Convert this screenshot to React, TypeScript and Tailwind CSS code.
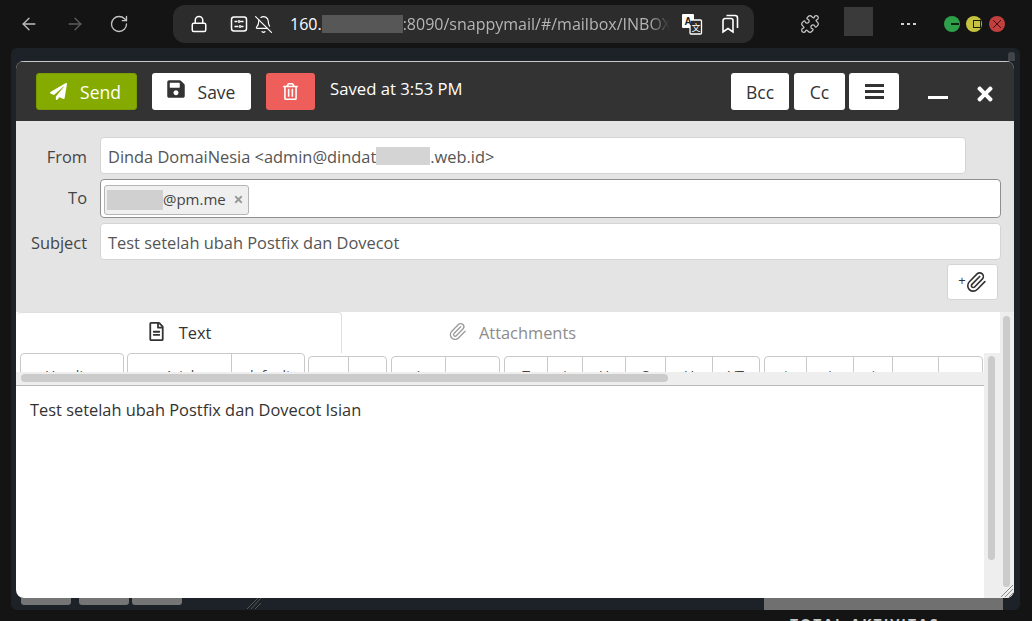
import React from "react";
import { ArrowLeft, ArrowRight, RotateCw, Lock, BellOff, Puzzle, Paperclip } from "lucide-react";
import { FaPaperPlane, FaSave, FaRegTrashAlt, FaRegFileAlt, FaTimes } from "react-icons/fa";

const groups: { mt: string; gap: string; cells: { w: string; t: string }[] }[] = [
  { mt: "mt-0", gap: "ml-[4px]", cells: [{ w: "w-[102px]", t: "Heading" }] },
  { mt: "mt-0", gap: "ml-[3px]", cells: [{ w: "w-[103px]", t: "Arial" }, { w: "w-[73px]", t: "default" }] },
  { mt: "mt-[3px]", gap: "ml-[3px]", cells: [{ w: "w-[39px]", t: "\u2013" }, { w: "w-[38px]", t: "\u2013" }] },
  { mt: "mt-[3px]", gap: "ml-[4px]", cells: [{ w: "w-[53px]", t: "i" }, { w: "w-[54px]", t: "o" }] },
  { mt: "mt-[3px]", gap: "ml-[4px]", cells: [{ w: "w-[42px]", t: "T" }, { w: "w-[35px]", t: "i" }, { w: "w-[43px]", t: "U" }, { w: "w-[40px]", t: "S" }, { w: "w-[47px]", t: "U" }, { w: "w-[47px]", t: "VT" }] },
  { mt: "mt-[3px]", gap: "ml-[4px]", cells: [{ w: "w-[41px]", t: "\u2018" }, { w: "w-[47px]", t: "i" }, { w: "w-[39px]", t: "\u2018" }, { w: "w-[46px]", t: "" }, { w: "w-[44px]", t: "" }] },
];

function Btn({ className, children }: { className: string; children: React.ReactNode }) {
  return (
    <div className={`h-[37px] rounded-[3px] flex items-center justify-center text-[17.5px] ${className}`}>
      {children}
    </div>
  );
}

export default function App() {
  return (
    <div className="w-[1032px] h-[621px] bg-[#141414] overflow-hidden flex flex-col font-['Open_Sans','Noto_Sans',sans-serif]">
      {/* browser bar */}
      <div className="h-[48px] shrink-0 flex items-start">
        <div className="flex items-center h-[48px] pl-[19px] text-[#bdbdbd]">
          <ArrowLeft size={20} strokeWidth={1.6} />
          <ArrowRight size={20} strokeWidth={1.6} className="ml-[26px] text-[#5c5c5c]" />
          <RotateCw size={20} strokeWidth={1.6} className="ml-[24px] text-[#c4c4c4]" />
        </div>
        <div className="ml-[44px] mt-[5px] w-[581px] h-[38px] rounded-[12px] bg-[#2c2c2c] flex items-center text-[16px] relative">
          <Lock size={18} strokeWidth={2} className="ml-[17px] text-white" />
          <svg width="18" height="18" viewBox="0 0 18 18" fill="none" stroke="white" strokeWidth="1.5" className="ml-[22px]">
            <rect x="1.5" y="2" width="15" height="14" rx="2.5" />
            <path d="M4.5 6.5h3M10 6.5h3.5M9 5v3M4.5 11.5h4M11 11.5h2.5M10 10v3" />
          </svg>
          <BellOff size={19} strokeWidth={1.5} className="ml-[6px] text-white" />
          <span className="ml-[17px] text-white">160.</span>
          <span className="w-[81px] h-[18px] bg-[#575757]" />
          <span className="text-[#b5b5b5] w-[267px] overflow-hidden whitespace-nowrap [mask-image:linear-gradient(to_right,black_92%,transparent)]">:8090/snappymail/#/mailbox/INBOX</span>
          <svg width="22" height="22" viewBox="0 0 22 22" className="ml-[11px]">
            <rect x="1" y="1" width="12" height="14" rx="1" fill="white" />
            <rect x="9" y="7" width="11.5" height="14" rx="1" fill="#2c2c2c" stroke="white" strokeWidth="1.3" />
            <text x="7" y="12" fontSize="10" fontWeight="700" textAnchor="middle" fill="#222" fontFamily="Liberation Sans">A</text>
            <text x="15" y="18" fontSize="9" textAnchor="middle" fill="white" fontFamily="Noto Sans CJK SC">文</text>
          </svg>
          <svg width="18" height="20" viewBox="0 0 18 20" fill="none" stroke="white" strokeWidth="1.6" className="ml-[18px]">
            <path d="M2 6.5a2 2 0 0 1 2-2h6a2 2 0 0 1 2 2V18l-5-3.5L2 18z" />
            <path d="M5.5 1.5H14a2.5 2.5 0 0 1 2.5 2.5v10" />
          </svg>
        </div>
        <div className="flex items-center h-[48px]">
          <Puzzle size={20} strokeWidth={1.5} className="ml-[46px] text-[#c8c8c8]" />
          <div className="ml-[24px] w-[29px] h-[29px] bg-[#3a3a3a] -mt-[5px]" />
          <div className="ml-[28px] w-[15px] flex justify-between">
            <span className="w-[3px] h-[2px] bg-[#cfcfcf]" />
            <span className="w-[3px] h-[2px] bg-[#cfcfcf]" />
            <span className="w-[3px] h-[2px] bg-[#cfcfcf]" />
          </div>
          <div className="ml-[28px] w-[16px] h-[16px] rounded-full bg-[#2ea04a] flex items-center justify-end pr-[1px]">
            <span className="w-[8px] h-[1.5px] bg-[#10240f]" />
          </div>
          <div className="ml-[6px] w-[16px] h-[16px] rounded-full bg-[#c6c33d] flex items-center justify-end pr-[1px]">
            <span className="w-[8px] h-[8px] border border-[#1c1c00]" />
          </div>
          <div className="ml-[7px] w-[16px] h-[16px] rounded-full bg-[#c23f3f] flex items-center justify-center">
            <svg width="10" height="10" viewBox="0 0 10 10" stroke="#4a0d0d" strokeWidth="1"><path d="M1 1l8 8M9 1l-8 8" /></svg>
          </div>
        </div>
      </div>

      {/* page panel */}
      <div className="ml-[11px] w-[1009px] h-[562px] shrink-0 bg-[#1c2228] rounded-t-[6px] rounded-b-[6px] flex flex-col">
        <div className="h-[13px] flex justify-end pr-[5px] pt-[4px]">
          <div className="w-[7px] h-[9px] bg-[#41454a] rounded-t-[3px]" />
        </div>

        {/* modal */}
        <div className="ml-[5px] w-[998px] h-[537px] rounded-[8px] overflow-hidden flex flex-col bg-white">
          {/* header */}
          <div className="h-[60px] shrink-0 bg-[#333333] border-t border-[#c9c9c9] flex items-start pt-[11px] pl-[20px] text-[#333]">
            <Btn className="w-[101px] bg-[#86ab00] text-white border border-[#7a9c00]">
              <FaPaperPlane size={17} className="-ml-[2px]" />
              <span className="ml-[13px] mt-[2px]">Send</span>
            </Btn>
            <Btn className="ml-[15px] w-[99px] bg-white">
              <FaSave size={20} className="-mt-[5px] -ml-[2px]" />
              <span className="ml-[12px] mt-[2px]">Save</span>
            </Btn>
            <Btn className="ml-[15px] w-[49px] bg-[#ee5f5b] text-white">
              <FaRegTrashAlt size={17} />
            </Btn>
            <div className="ml-[15px] w-[133px] whitespace-nowrap text-white text-[16.7px] mt-[3px]">Saved at 3:53 PM</div>
            <Btn className="ml-[268px] w-[58px] bg-white"><span className="mt-[2px]">Bcc</span></Btn>
            <Btn className="ml-[5px] w-[51px] bg-white"><span className="mt-[2px]">Cc</span></Btn>
            <Btn className="ml-[4px] w-[50px] bg-white flex-col gap-[3px]">
              <span className="w-[19px] h-[3px] bg-[#333]" />
              <span className="w-[19px] h-[3px] bg-[#333]" />
              <span className="w-[19px] h-[3px] bg-[#333]" />
            </Btn>
            <div className="ml-[29px] mt-[23px] w-[20px] h-[3px] bg-white" />
            <FaTimes size={22} className="ml-[26px] mt-[10px] text-white" />
          </div>

          {/* form */}
          <div className="h-[191px] shrink-0 bg-[#e4e4e4] flex flex-col pt-[16px] pr-[13px] text-[16.4px] text-[#555]">
            <div className="flex items-center h-[37px]">
              <label className="w-[71px] text-right text-[#444] pt-[3px]">From</label>
              <div className="ml-[13px] w-[866px] h-[37px] bg-white border border-[#d4d4d4] rounded-[4px] flex items-center pl-[7px] pt-[3px] whitespace-nowrap">
                Dinda DomaiNesia &lt;admin@dindat
                <span className="w-[54px] h-[18px] bg-[#d4d4d4] -mt-[3px]" />
                .web.id&gt;
              </div>
            </div>
            <div className="flex items-center h-[39px] mt-[5px]">
              <label className="w-[71px] text-right text-[#444] -mt-[1px]">To</label>
              <div className="ml-[13px] flex-1 h-[39px] bg-white border border-[#8f8f8f] rounded-[4px] flex items-center pl-[3px] pt-[2px]">
                <div className="h-[30px] w-[145px] bg-[#efefef] border border-[#b5b5b5] rounded-[3px] flex items-center pl-[2px] text-[15px] text-[#444]">
                  <span className="w-[56px] h-[20px] bg-[#d0d0d0]" />
                  <span>@pm.me</span>
                  <FaTimes size={11} className="ml-[7px] text-[#999]" />
                </div>
              </div>
            </div>
            <div className="flex items-center h-[37px] mt-[5px]">
              <label className="w-[71px] text-right text-[#444] pt-[3px] whitespace-nowrap">Subject</label>
              <div className="ml-[13px] flex-1 h-[37px] bg-white border border-[#d4d4d4] rounded-[4px] flex items-center pl-[7px] pt-[3px]">
                Test setelah ubah Postfix dan Dovecot
              </div>
            </div>
            <div className="flex justify-end mt-[4px] mr-[3px]">
              <div className="w-[51px] h-[36px] bg-white border border-[#d4d4d4] rounded-[3px] flex items-center justify-center text-[#333]">
                <span className="text-[13px] leading-none -mr-[1px] -mt-[3px]">+</span>
                <Paperclip size={22} strokeWidth={1.8} />
              </div>
            </div>
          </div>

          {/* body */}
          <div className="flex-1 flex min-h-0">
            <div className="flex-1 flex flex-col min-w-0">
              {/* tabs */}
              <div className="h-[41px] shrink-0 flex text-[16.4px]">
                <div className="ml-[1px] w-[325px] h-[41px] border-t border-r border-[#dfdfdf] rounded-tr-[4px] rounded-tl-[4px] flex items-center justify-center text-[#333]">
                  <FaRegFileAlt size={19} className="-mt-[3px]" />
                  <span className="ml-[13px] mt-[1px]">Text</span>
                </div>
                <div className="w-[340px] h-[41px] flex items-center justify-center text-[#8c8c8c]">
                  <Paperclip size={19} strokeWidth={1.6} className="-mt-[2px] text-[#999]" />
                  <span className="ml-[12px] mt-[1px]">Attachments</span>
                </div>
              </div>
              <div className="flex-1 flex min-h-0">
                <div className="flex-1 flex flex-col min-w-0">
                  {/* clipped toolbar */}
                  <div className="h-[19px] shrink-0 overflow-hidden flex">
                    {groups.map((g, i) => (
                      <div key={i} className={`${g.gap} ${g.mt} h-[30px] flex shrink-0 border border-[#c9c9c9] rounded-[4px] overflow-hidden`}>
                        {g.cells.map((c, j) => (
                          <div key={j} className={`${c.w} h-full shrink-0 ${j > 0 ? "border-l border-[#c9c9c9]" : ""} text-center text-[14px] text-[#444] ${g.mt === "mt-0" ? "pt-[14px]" : "pt-[11px]"} leading-[16px]`}>
                            {c.t}
                          </div>
                        ))}
                      </div>
                    ))}
                  </div>
                  {/* horizontal scrollbar */}
                  <div className="h-[14px] shrink-0 bg-[#eeeeee] border-b border-[#b9b9b9] pt-[2px] pl-[5px]">
                    <div className="w-[647px] h-[8px] rounded-[4px] bg-[#cbcbcb]" />
                  </div>
                  <div className="flex-1 pl-[14px] pt-[12px] text-[16.4px] text-[#333]">
                    Test setelah ubah Postfix dan Dovecot Isian
                  </div>
                </div>
                <div className="w-[16px] shrink-0 bg-[#eeeeee] pt-[3px] pl-[4px]">
                  <div className="w-[7px] h-[204px] rounded-[4px] bg-[#cbcbcb]" />
                </div>
              </div>
            </div>
            {/* outer scrollbar */}
            <div className="w-[14px] shrink-0 bg-[#eeeeee] pt-[4px] pl-[3px] flex flex-col">
              <div className="w-[7px] h-[271px] rounded-[4px] bg-[#cbcbcb]" />
              <svg width="14" height="14" viewBox="0 0 14 14" stroke="#8a8a8a" strokeWidth="1" className="-ml-[3px] mt-[-3px]">
                <path d="M1 13L13 1M5 13l8-8M9 13l4-4" />
              </svg>
            </div>
          </div>
        </div>

        {/* beneath modal */}
        <div className="h-[12px] flex items-start">
          <div className="ml-[10px] w-[50px] h-[7px] bg-[#757575] rounded-b-[3px]" />
          <div className="ml-[8px] w-[50px] h-[7px] bg-[#757575] rounded-b-[3px]" />
          <div className="ml-[3px] w-[50px] h-[7px] bg-[#757575] rounded-b-[3px]" />
          <svg width="14" height="11" viewBox="0 0 14 11" stroke="#555" strokeWidth="1" className="ml-[65px]">
            <path d="M0 11L11 0M4 11L14 0M8 11l6-6" />
          </svg>
          <div className="ml-[503px] w-[239px] h-[12px] bg-[#707070]" />
        </div>
      </div>

      <div className="pl-[790px] mt-[6px] text-[14px] font-bold leading-[16px] text-[#c9c9c9] tracking-[2px] whitespace-nowrap">
        TOTAL AKTIVITAS
      </div>
    </div>
  );
}
